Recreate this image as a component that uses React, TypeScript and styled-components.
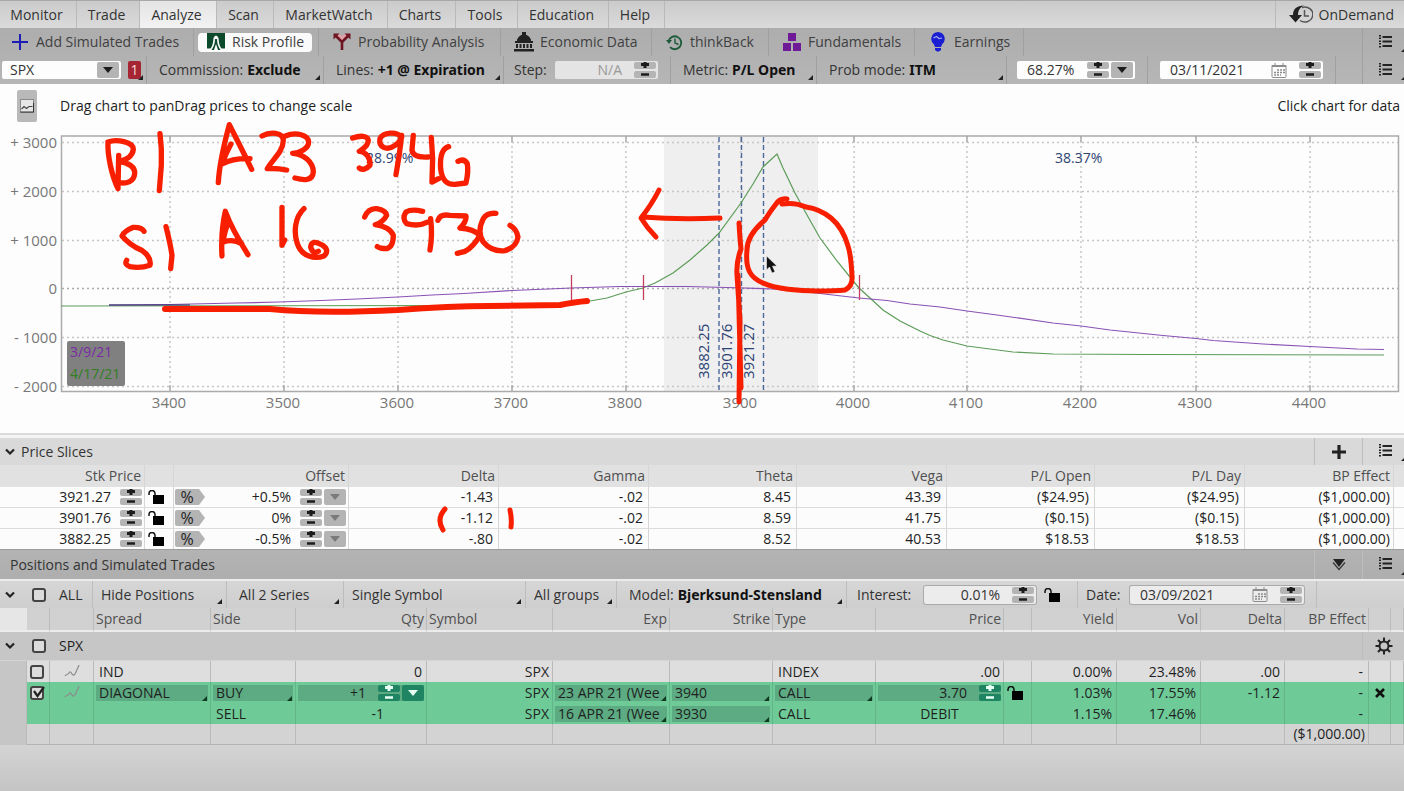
import React from "react";
import styled, { createGlobalStyle, css } from "styled-components";

const GlobalStyle = createGlobalStyle`
  *, *::before, *::after { box-sizing: border-box; }
  html, body, #root { min-height: 100vh; }
  body {
    margin: 0;
    font-family: "Open Sans", "Noto Sans", sans-serif;
    font-size: 14px;
    line-height: 20px;
    color: #333;
    background: #c6c6c6;
  }
  button, input, select { font: inherit; color: inherit; margin: 0; padding: 0; border: 0; background: none; border-radius: 0; }
  select { appearance: none; outline: none; }
  svg { display: block; flex: none; }
`;

const Page = styled.div`
  min-height: 100vh;
  display: flex;
  flex-direction: column;
`;

/* ---------- icons ---------- */

const PlusIcon = () => (
  <svg width="16" height="16" viewBox="0 0 16 16"><path d="M8 0v16M0 8h16" stroke="#1d1db4" strokeWidth="2" /></svg>
);
const RiskIcon = () => (
  <svg width="18" height="18" viewBox="0 0 18 18">
    <rect width="18" height="17" fill="#0d4a2c" />
    <path d="M0 15.500h3.500Q6 13 6.500 5Q9 0 11.500 5Q12 13 14.500 15.500H18V18H0z" fill="#fff" />
    <path d="M4.500 17Q8 12 8 6h2q0 6 3.500 11h-2.500l-2-6-2 6z" fill="#0d4a2c" />
  </svg>
);
const ForkIcon = () => (
  <svg width="18" height="18" viewBox="0 0 18 18">
    <path d="m3 3 6 7 6-7-3-2-3 2-3-2z" fill="#e2a0a8" />
    <path d="M9 17V9L3 3M9 9l6-6" fill="none" stroke="#6d1522" strokeWidth="2.600" />
    <path d="M.5.500h6L.5 6.500zM17.500.500h-6l6 6z" fill="#6d1522" />
  </svg>
);
const BankIcon = () => (
  <svg width="20" height="20" viewBox="0 0 20 20" fill="#222">
    <path d="M8 0h4v3H8zM3 9a7 6.500 0 0 1 14 0zM1 9h18v2H1zM2 12h2v4H2zM5.500 12h2v4h-2zM9 12h2v4H9zM12.500 12h2v4h-2zM16 12h2v4h-2zM0 17h20v2.500H0z" />
  </svg>
);
const BackIcon = () => (
  <svg width="17" height="17" viewBox="0 0 17 17" fill="none" stroke="#1c5a3a" strokeWidth="1.800">
    <path d="M2.500 7A6.500 6.500 0 1 1 4 13.200" />
    <path d="M0 6h6L3 10z" fill="#1c5a3a" stroke="none" />
    <path d="M9 4.500V9l3.500 1.500" strokeWidth="1.400" />
  </svg>
);
const BlocksIcon = () => (
  <svg width="18" height="18" viewBox="0 0 18 18" fill="#6f1a96">
    <path d="M5 0h8v8H5zM0 10h8v8H0zM10 10h8v8h-8z" />
  </svg>
);
const BulbIcon = () => (
  <svg width="14" height="20" viewBox="0 0 14 20">
    <path d="M7 0a7 7 0 0 1 4 12.500L10 15H4l-1-2.500A7 7 0 0 1 7 0zM4 16h6v2l-2 1.500H6L4 18z" fill="#1a1ed2" />
    <path d="m2.500 6 3-1.500 2.500 2 3-.500" fill="none" stroke="#a6a8f0" strokeWidth="1.200" />
  </svg>
);
const OnDemandIcon = () => (
  <svg width="24" height="20" viewBox="0 0 24 20">
    <path d="M13 2.500A8 7.500 0 1 1 11 15.500" fill="none" stroke="#555" strokeWidth="1.500" />
    <path d="M15.500 5v6H20" fill="none" stroke="#555" strokeWidth="1.500" />
    <path d="M15 .500C8 .500 4 4 4 10H0l6.500 7.500L13 10H9c0-5 2-7.500 6-9.500z" fill="#222" />
  </svg>
);
const ListIcon = () => (
  <svg width="13" height="13" viewBox="0 0 13 13" fill="#222">
    <path d="M3.500 1H13v2H3.500zM3.500 5.500H13v2H3.500zM3.500 10H13v2H3.500zM0 0h2v1.500H0zM0 2.500h2V4H0zM0 5.500h2V7H0zM0 8h2v1.500H0zM0 11h2v1.500H0z" />
  </svg>
);
const ChevronIcon = () => (
  <svg width="10" height="8" viewBox="0 0 10 8"><path d="m1 1.500 4 4 4-4" fill="none" stroke="#222" strokeWidth="2.200" /></svg>
);
const LockIcon = () => (
  <svg width="16" height="14" viewBox="0 0 16 14">
    <path d="M1 5V3.500a3 3 0 0 1 6 0V6" fill="none" stroke="#111" strokeWidth="1.500" />
    <path d="M5 5h11v9H5z" fill="#000" />
  </svg>
);
const CalendarIcon = () => (
  <svg width="16" height="15" viewBox="0 0 16 15" fill="none" stroke="#8c8c8c">
    <path d="M1 2.500h14v11a1 1 0 0 1-1 1H2a1 1 0 0 1-1-1z" />
    <path d="M1 3h14" strokeWidth="2" />
    <path d="M4 0v3M12 0v3" />
    <path d="M6 7h8M3 9.500h11M3 12h7" strokeWidth="1.500" strokeDasharray="2 1" />
  </svg>
);
const ImageIcon = () => (
  <svg width="14" height="14" viewBox="0 0 14 14">
    <rect x=".5" y=".5" width="13" height="13" fill="#e6e6e6" stroke="#8a8a8a" />
    <path d="m1.500 10 2.500-2.500 2.500 2L9 7.500l3.500 0" fill="none" stroke="#444" strokeWidth="1.200" />
    <path d="M.5 13h13V4" fill="none" stroke="#333" />
  </svg>
);
const GearIcon = () => (
  <svg width="18" height="18" viewBox="-9 -9 18 18" fill="none" stroke="#222" strokeWidth="2">
    <circle r="4.500" />
    <path d="M0-8.500V-5M0 8.500V5M-8.500 0H-5M8.500 0H5M-6-6l2.500 2.500M6-6 3.500-3.500M-6 6l2.500-2.500M6 6 3.500 3.500" />
  </svg>
);
const AddIcon = () => (
  <svg width="14" height="14" viewBox="0 0 14 14"><path d="M7 0v14M0 7h14" stroke="#222" strokeWidth="3.200" /></svg>
);
const CollapseIcon = () => (
  <svg width="14" height="13" viewBox="0 0 14 13"><path d="M1 1h12L7 9z" fill="#222" /><path d="m1 4.500 6 7 6-7" fill="none" stroke="#333" strokeWidth="1.200" /></svg>
);
const CloseIcon = () => (
  <svg width="10" height="10" viewBox="0 0 10 10"><path d="m1 1 8 8M9 1 1 9" stroke="#111" strokeWidth="2.600" /></svg>
);
const CurveIcon = () => (
  <svg width="16" height="13" viewBox="0 0 16 13"><path d="M1 11c1-2 3-1 4-3s2-1 3 1 3 1 4-2 2-4 3-7" fill="none" stroke="#8c8c8c" strokeWidth="1.200" /></svg>
);

/* ---------- shared controls ---------- */

const corner = css`
  position: relative;
  &::after {
    content: "";
    position: absolute;
    right: 3px;
    bottom: 4px;
    border-left: 5px solid transparent;
    border-bottom: 5px solid #222;
    pointer-events: none;
  }
`;

const Field = styled.span<{ $w: number; $muted?: boolean; $outlined?: boolean }>`
  display: flex;
  align-items: center;
  gap: 2px;
  flex: none;
  width: ${(p) => p.$w}px;
  height: 18px;
  padding-right: 2px;
  border-radius: 2px;
  background: ${(p) => (p.$muted ? "#e4e4e4" : "#fdfdfd")};
  color: ${(p) => (p.$muted ? "#999" : "#333")};
  ${(p) => p.$outlined && "box-shadow: 0 0 0 1px #aaa; background: #ececec;"}
`;

const TextInput = styled.input<{ $right?: boolean }>`
  flex: 1;
  min-width: 0;
  width: 0;
  height: 18px;
  padding: 0 10px;
  outline: none;
  text-align: ${(p) => (p.$right ? "right" : "left")};
`;
const SymbolInput = styled(TextInput)`
  padding: 0 8px;
`;

const StepStack = styled.span`
  display: inline-flex;
  flex-direction: column;
  gap: 2px;
  flex: none;
`;
const StepButton = styled.button<{ $green?: boolean }>`
  display: block;
  width: 22px;
  height: 7px;
  border-radius: 2px;
  background: ${(p) => (p.$green ? "#1f8462" : "#b4b4b4")};
  color: ${(p) => (p.$green ? "#e8fff4" : "#1c1c1c")};
`;
const DropButton = styled.button<{ $green?: boolean; $faint?: boolean }>`
  display: flex;
  align-items: center;
  justify-content: center;
  flex: none;
  width: 22px;
  height: 16px;
  border-radius: 2px;
  background: ${(p) => (p.$green ? "#1f8462" : "#b4b4b4")};
  color: ${(p) => (p.$green ? "#e8fff4" : p.$faint ? "#7a7a7a" : "#1c1c1c")};
`;
const IconButton = styled.button`
  display: flex;
  align-items: center;
  justify-content: center;
  flex: none;
`;

const Stepper = ({ green, name }: { green?: boolean; name: string }) => (
  <StepStack>
    <StepButton type="button" $green={green} aria-label={`Increase ${name}`}>
      <svg width="22" height="7" viewBox="0 0 22 7"><path d="M11 0v6M7 2.500h8" stroke="currentColor" strokeWidth="3" /></svg>
    </StepButton>
    <StepButton type="button" $green={green} aria-label={`Decrease ${name}`}>
      <svg width="22" height="7" viewBox="0 0 22 7"><path d="M7 3.500h8" stroke="currentColor" strokeWidth="2.500" /></svg>
    </StepButton>
  </StepStack>
);
const Drop = ({ green, faint, name }: { green?: boolean; faint?: boolean; name: string }) => (
  <DropButton type="button" $green={green} $faint={faint} aria-label={`${name} options`}>
    <svg width="10" height="6" viewBox="0 0 10 6"><path d="M0 0h10L5 6z" fill="currentColor" /></svg>
  </DropButton>
);

const CheckWrap = styled.span`
  position: relative;
  display: block;
  width: 14px;
  height: 14px;
  flex: none;
  svg { position: absolute; left: 2px; top: 0; pointer-events: none; }
`;
const CheckInput = styled.input`
  appearance: none;
  display: block;
  width: 14px;
  height: 14px;
  border: 2px solid #444;
  border-radius: 3px;
  background: #dcdcdc;
`;
const Check = ({ name, on }: { name: string; on?: boolean }) => (
  <CheckWrap>
    <CheckInput type="checkbox" aria-label={name} defaultChecked={on} />
    {on && <svg width="13" height="13" viewBox="0 0 13 13"><path d="m2 5 3.500 5L12 1" fill="none" stroke="#222" strokeWidth="2.200" /></svg>}
  </CheckWrap>
);

/* ---------- top tabs ---------- */

const TabBar = styled.nav`
  display: flex;
  height: 28px;
  border-top: 1px solid #a8a8a8;
  background: linear-gradient(#cbcbcb, #dadada);
`;
const Tab = styled.button<{ $w: number; $active?: boolean }>`
  width: ${(p) => p.$w}px;
  padding-right: 3px;
  border-right: 1px solid #b9b9b9;
  color: #333;
  background: ${(p) => (p.$active ? "linear-gradient(#e4e4e4, #f2f2f2)" : "none")};
`;
const OnDemand = styled.button`
  display: flex;
  align-items: center;
  gap: 6px;
  margin-left: auto;
  padding: 0 10px 0 13px;
  border-left: 1px solid #b9b9b9;
`;

/* ---------- toolbars ---------- */

const Toolbars = styled.div`
  background: linear-gradient(#adadad, #b6b6b6);
`;
const Bar = styled.div`
  display: flex;
  height: 28px;
`;
const Segment = styled.div<{ $w: number; $pad?: number; $corner?: boolean }>`
  display: flex;
  align-items: center;
  flex: none;
  gap: 4px;
  width: ${(p) => p.$w}px;
  padding-left: ${(p) => p.$pad ?? 12}px;
  border-right: 1px solid #a0a0a0;
  white-space: nowrap;
  ${(p) => p.$corner && corner}
`;
const ToolButton = styled.button<{ $active?: boolean }>`
  display: flex;
  align-items: center;
  gap: 6px;
  height: 19px;
  padding: ${(p) => (p.$active ? "0 8px" : "0")};
  border-radius: 4px;
  background: ${(p) => (p.$active ? "#fafafa" : "none")};
  color: #404040;
  white-space: nowrap;
`;
const IconSlot = styled.span`
  display: flex;
  justify-content: center;
  width: 20px;
`;
const Spacer = styled.div`
  flex: 1;
`;
const MenuSlot = styled.div`
  ${corner}
  display: flex;
  align-items: center;
  justify-content: center;
  width: 42px;
  padding: 0 0 2px 4px;
  flex: none;
  border-left: 1px solid #a0a0a0;
  &::after { right: -2px; }
`;
const InlineLabel = styled.label`
  display: flex;
  align-items: center;
  gap: 4px;
  flex: 1;
  min-width: 0;
  color: #333;
`;
const PlainSelect = styled.select<{ $bold?: boolean }>`
  flex: 1;
  min-width: 0;
  width: 0;
  height: 20px;
  ${(p) => p.$bold && `font-family: "Noto Sans", "Open Sans", sans-serif; font-weight: 700; color: #111;`}
`;
const SymbolBox = styled.span`
  display: flex;
  align-items: center;
  width: 119px;
  height: 18px;
  padding-right: 2px;
  border-radius: 2px;
  background: #fdfdfd;
`;
const Badge = styled.button`
  width: 13px;
  height: 18px;
  margin-left: 3px;
  border-radius: 2px;
  background: #a52532;
  color: #f4dada;
  line-height: 18px;
`;
const FieldGap = styled.span`
  width: 8px;
  flex: none;
`;

const tabs: [string, number][] = [
  ["Monitor", 77], ["Trade", 63], ["Analyze", 77], ["Scan", 57], ["MarketWatch", 114],
  ["Charts", 68], ["Tools", 62], ["Education", 91], ["Help", 56],
];

const tools: { label: string; w: number; pad: number; icon: React.ReactNode; active?: boolean }[] = [
  { label: "Add Simulated Trades", w: 194, pad: 10, icon: <PlusIcon /> },
  { label: "Risk Profile", w: 125, pad: 4, icon: <RiskIcon />, active: true },
  { label: "Probability Analysis", w: 182, pad: 13, icon: <ForkIcon /> },
  { label: "Economic Data", w: 151, pad: 13, icon: <BankIcon /> },
  { label: "thinkBack", w: 117, pad: 12, icon: <BackIcon /> },
  { label: "Fundamentals", w: 146, pad: 13, icon: <BlocksIcon /> },
  { label: "Earnings", w: 109, pad: 13, icon: <BulbIcon /> },
];

const Choice = ({ label, value, bold }: { label?: string; value: string; bold?: boolean }) => (
  <InlineLabel>
    {label}
    <PlainSelect $bold={bold} aria-label={label ? undefined : value}>
      <option>{value}</option>
    </PlainSelect>
  </InlineLabel>
);

/* ---------- chart ---------- */

const ChartPanel = styled.section`
  background: #fdfdfd;
  border-bottom: 2px solid #dadada;
`;
const ChartHints = styled.div`
  display: flex;
  align-items: center;
  height: 44px;
  padding: 0 4px 0 17px;
  color: #1e1e1e;
`;
const SnapshotButton = styled.button`
  display: flex;
  align-items: center;
  justify-content: center;
  width: 20px;
  height: 32px;
  margin-right: 23px;
  border-radius: 2px;
  background: #b9b9b9;
`;
const ChartSvg = styled.svg`
  width: 100%;
  height: auto;
  overflow: visible;
`;
const AxisText = styled.text`
  font-size: 15px;
  fill: #777;
`;
const SliceLabel = styled.text<{ $small?: boolean }>`
  font-size: ${(p) => (p.$small ? 14 : 15)}px;
  fill: #2c4373;
`;
const LegendText = styled.text<{ $color: string }>`
  font-size: 14px;
  fill: ${(p) => p.$color};
`;

const gridX: [number, string][] = [
  [170, "3400"], [284, "3500"], [398, "3600"], [512, "3700"], [626, "3800"], [741, "3900"],
  [854, "4000"], [967, "4100"], [1081, "4200"], [1196, "4300"], [1310, "4400"],
];
const gridY: [number, string][] = [
  [142, "+ 3000"], [191, "+ 2000"], [240, "+ 1000"], [288, "0"], [337, "- 1000"], [386, "- 2000"],
];
const greenLine =
  "61,306 480,305.500 540,304.500 571,303 590,301 607,298 626,292 643,288 655,283 673,273 690,260 707,245 719,233 741,203 753,184 763,167 777,154 783,168 795,193 807,215 820,238 837,261 854,282 859,288 870,298 883,310 900,321 920,331 930,335.500 943,340 967,346 990,349 1013,352 1053,354 1147,354.500 1384,355";
const purpleLine =
  "109,305 170,304.500 236,303 279,302 321,300.500 357,299 398,297 432,295 464,293.500 512,290.500 560,288.500 571,288 620,286.500 687,286.500 727,287.500 773,289 807,292 833,295 859,298 887,300.500 910,304 940,307 967,311 997,315 1053,323 1081,326 1110,330 1163,335.500 1196,338.500 1213,340.500 1263,344 1310,346.500 1357,349 1384,349.500";

/* Handwritten notes, drawn on a canvas three times finer than the chart's. */
const noteStrokes = [
  "M24 60C22 100 35 160 54 200L56 100M24 60C50 50 100 60 100 82C98 105 75 115 58 118C85 122 106 135 104 155C102 178 80 186 58 182",
  "M180 35Q186 80 184 130L178 206",
  "M355 182Q358 120 388 8Q425 80 455 142M393 66Q372 105 368 125Q400 108 450 110",
  "M486 42C510 28 550 30 550 55C550 90 515 115 502 140Q530 138 560 144",
  "M556 42C590 28 625 40 626 60C626 80 600 92 578 94C610 95 640 120 640 150C638 178 610 175 585 168",
  "M758 48C780 40 803 40 805 55C805 75 785 82 778 88C800 90 812 110 810 130C800 142 785 145 778 138",
  "M905 45C890 28 850 30 840 50C835 75 860 88 885 70Q902 60 905 40Q900 90 888 158",
  "M940 40L936 85Q940 108 985 105M994 46L998 110L996 180L1016 170",
  "M1046 74C1025 80 1020 110 1022 140C1026 175 1040 188 1065 187L1098 183Q1106 150 1102 125Q1092 108 1074 118",
  "M132 328Q125 315 100 316Q72 328 66 342Q90 370 125 385Q155 405 150 430Q120 440 90 434Q72 428 80 415",
  "M198 314Q212 370 216 400L212 440",
  "M366 402Q362 330 376 268Q395 320 444 398M385 300Q370 340 370 360Q400 350 425 365",
  "M546 256V370L554 354",
  "M612 260C585 285 580 330 592 365C605 405 645 412 672 402Q690 385 668 370Q635 350 632 375Q638 398 655 388",
  "M794 285Q805 258 830 260Q858 265 860 280Q850 300 826 308Q870 315 880 340Q880 375 860 380Q840 380 832 374",
  "M968 268Q935 260 918 270Q905 290 920 305Q955 315 985 300M992 290Q998 340 990 384",
  "M1014 295Q1020 275 1050 280L1098 282Q1100 300 1080 318Q1120 320 1140 340Q1120 375 1095 388L1072 394",
  "M1188 274Q1160 272 1150 290Q1130 330 1150 360Q1175 390 1215 386Q1250 375 1254 345Q1250 320 1230 310",
];

const Chart = () => (
  <ChartSvg viewBox="0 128 1404 305" role="img" aria-label="Risk profile chart">
    <rect x="664" y="136" width="154" height="255" fill="#efefef" />
    <g stroke="#c6c6c6" strokeWidth="1.500" strokeDasharray="2 3">
      {gridY.map(([y]) => <path key={y} d={`M62 ${y}.500H1398`} stroke={y === 288 ? "#aaa" : undefined} />)}
      {gridX.map(([x]) => <path key={x} d={`M${x} 136V391`} />)}
    </g>
    {gridX.map(([x]) => <path key={x} d={`M${x} 136v6M${x} 391v-6`} stroke="#aaa" strokeWidth="1.500" />)}
    <rect x="61.500" y="136" width="1337" height="255.500" fill="none" stroke="#ababab" strokeWidth="1.500" />
    <rect x="67" y="341" width="58" height="45" rx="2" fill="#808080" />
    {gridY.map(([y, t]) => <AxisText key={t} x="57" y={y + 6} textAnchor="end">{t}</AxisText>)}
    {gridX.map(([x, t]) => <AxisText key={t} x={x - 1} y="408" textAnchor="middle">{t}</AxisText>)}
    <LegendText $color="#7a2ba6" x="70" y="357">3/9/21</LegendText>
    <LegendText $color="#317f22" x="70" y="379">4/17/21</LegendText>
    <g stroke="#4a6898" strokeWidth="1.400" strokeDasharray="5 3">
      <path d="M719 137V391M741.500 137V391M763.500 137V391" />
    </g>
    <SliceLabel x="709" y="379" transform="rotate(-90 709 379)">3882.25</SliceLabel>
    <SliceLabel x="732" y="379" transform="rotate(-90 732 379)">3901.76</SliceLabel>
    <SliceLabel x="754" y="379" transform="rotate(-90 754 379)">3921.27</SliceLabel>
    <SliceLabel $small x="366" y="163">28.99%</SliceLabel>
    <SliceLabel $small x="1055" y="163">38.37%</SliceLabel>
    <polyline points={greenLine} fill="none" stroke="#5c9c58" strokeWidth="1.200" />
    <polyline points={purpleLine} fill="none" stroke="#8a52b4" strokeWidth="1.200" />
    <path d="M109 305H190" stroke="#2a2a66" />
    <g stroke="#c0405e" strokeWidth="1.300">
      <path d="M571.500 275v25" />
      <path d="M643.500 275v25" />
      <path d="M859.500 275v25" />
    </g>
    <g transform="translate(100 122) scale(0.3333)" fill="none" stroke="#f81f00" strokeWidth="16" strokeLinecap="round" strokeLinejoin="round">
      {noteStrokes.map((d) => <path key={d} d={d} />)}
    </g>
    <g fill="none" stroke="#f81f00" strokeWidth="5" strokeLinecap="round" strokeLinejoin="round">
      <path d="M720 218Q680 220 642 217M659 190Q652 204 641 218Q647 228 656 237" />
      <path d="M787 199Q780 198 776 204Q769 213 765 220Q747 235 747 250C745 270 751 278 763 283C775 289 800 291 817 291Q836 291 845 290Q853 286 852 276Q851 255 848 246Q843 228 831 218Q820 209 806 207Q795 202 782 204" />
      <path d="M165 309H270Q320 314 398 310Q450 306 489 306L560 305Q575 302 587 301" strokeWidth="6" />
      <path d="M739 223Q740 240 741 249Q736 262 737 275L740 320L739 402M738 275L741 388" />
    </g>
    <path d="M766.500 256v14l3-3 2.500 6 3-1.300-2.500-5.500 4.500-.200z" fill="#111" stroke="#f2f2f2" strokeWidth=".6" />
  </ChartSvg>
);

/* ---------- price slices ---------- */

const SectionBar = styled.header<{ $dark?: boolean }>`
  display: flex;
  align-items: center;
  height: ${(p) => (p.$dark ? 30 : 27)}px;
  padding-left: ${(p) => (p.$dark ? 10 : 5)}px;
  background: ${(p) => (p.$dark ? "linear-gradient(#b3b3b3, #aeaeae)" : "#d9d9d9")};
  ${(p) => p.$dark && "border-top: 1px solid #9d9d9d;"}
`;
const SlicesSection = styled.section`
  border-top: 3px solid #f4f4f4;
`;
const SectionTitle = styled.h2<{ $gap?: boolean }>`
  flex: 1;
  margin: 0 0 0 ${(p) => (p.$gap ? 6 : 0)}px;
  font-size: 14px;
  font-weight: 400;
`;
const BarCell = styled.div`
  display: flex;
  align-items: center;
  justify-content: center;
  align-self: stretch;
  width: 48px;
  border-left: 1px solid #bdbdbd;
`;
const BarMenu = styled(MenuSlot)`
  align-self: stretch;
  border-left-color: #bdbdbd;
`;
const GearCell = styled(BarCell)`
  width: 42px;
`;

const DataTable = styled.table`
  width: 100%;
  table-layout: fixed;
  border-collapse: separate;
  border-spacing: 0;
  white-space: nowrap;
  th { font-weight: 400; color: #505050; padding: 0; }
  td { padding: 0; }
`;
const SlicesTable = styled(DataTable)`
  color: #222;
  th { height: 22px; padding-right: 3px; text-align: right; background: #e1e1e1; border-right: 1px solid #d6d6d6; }
  td { height: 21px; padding-right: 5px; text-align: right; border-right: 1px solid #d6d6d6; background: #fcfcfc; border-bottom: 1px solid #dcdcdc; }
  tbody tr:last-child td { border-bottom: 0; height: 20px; }
  td:nth-last-child(2) { padding-right: 3px; }
  td:last-child, th:last-child { border-right: 0; padding: 0; }
`;
const CellControls = styled.div`
  display: flex;
  align-items: center;
  justify-content: flex-end;
  gap: 2px;
`;
const CellInput = styled.input`
  flex: 1;
  min-width: 0;
  width: 0;
  height: 20px;
  padding-right: 7px;
  text-align: right;
  outline: none;
`;
const PercentTag = styled.button`
  width: 30px;
  height: 16px;
  margin-left: 1px;
  padding-right: 6px;
  border-radius: 2px 0 0 2px;
  background: #b4b4b4;
  clip-path: polygon(0 0, 80% 0, 100% 50%, 80% 100%, 0 100%);
  font-size: 16px;
  line-height: 16px;
`;
const Tight = styled.td`
  && { padding-right: 2px; }
`;
const LockHolder = styled.div`
  display: flex;
  align-items: center;
  padding-left: 3px;
`;
const MarkedCell = styled.div`
  position: relative;
`;
const MarkSvg = styled.svg`
  position: absolute;
  right: -24px;
  top: -4px;
  pointer-events: none;
`;

const slices = [
  ["3921.27", "+0.5%", "-1.43", "-.02", "8.45", "43.39", "($24.95)", "($24.95)", "($1,000.00)"],
  ["3901.76", "0%", "-1.12", "-.02", "8.59", "41.75", "($0.15)", "($0.15)", "($1,000.00)"],
  ["3882.25", "-0.5%", "-.80", "-.02", "8.52", "40.53", "$18.53", "$18.53", "($1,000.00)"],
];
const sliceCols = [145, 29, 175, 150, 150, 148, 150, 148, 150, 149, 10];

/* ---------- positions ---------- */

const FilterBar = styled.div`
  display: flex;
  height: 27px;
  background: linear-gradient(#d6d6d6, #cecece);
`;
const Rule = styled.div`
  height: 2px;
  background: #ececec;
`;
const FilterSegment = styled(Segment)`
  border-right-color: #bdbdbd;
  &::after { right: 4px; }
`;
const PositionsTable = styled(DataTable)`
  color: #1f1f1f;
  thead th { height: 24px; padding: 0 2px; background: #d1d1d1; border-right: 1px solid #bbb; border-bottom: 2px solid #ececec; }
  thead th:first-child { background: #e6e6e6; border-right: 0; }
  tbody td { height: 21px; border-right: 1px solid #bababa; }
`;
const HeadCell = styled.th<{ $left?: boolean }>`
  text-align: ${(p) => (p.$left ? "left" : "right")};
`;
const GroupCell = styled.td`
  && { height: 29px; background: #c6c6c6; border: 0; border-bottom: 1px solid #d4d4d4; }
`;
const GroupInner = styled.div`
  display: flex;
  align-items: center;
  height: 28px;
  padding-left: 5px;
`;
const GroupLead = styled.div<{ $w: number }>`
  display: flex;
  align-items: center;
  flex: none;
  gap: 17px;
  width: ${(p) => p.$w}px;
`;
const Row = styled.tr<{ $tone: "light" | "green" | "blank" }>`
  td:not(:first-child) {
    background: ${(p) => ({ light: "#dedede", green: "#6ecb98", blank: "#d3d3d3" })[p.$tone]};
    ${(p) => p.$tone === "green" && "border-right-color: #62b588;"}
    ${(p) => p.$tone === "blank" && "border-bottom: 1px solid #b4b4b4;"}
  }
`;
const Cell = styled.td<{ $left?: boolean; $center?: boolean; $pr?: number; $pl?: number }>`
  && {
    text-align: ${(p) => (p.$left ? "left" : p.$center ? "center" : "right")};
    padding-left: ${(p) => p.$pl ?? 0}px;
    padding-right: ${(p) => p.$pr ?? 0}px;
  }
`;
const Centered = styled.div`
  display: flex;
  align-items: center;
  justify-content: center;
`;
const GreenPick = styled.div`
  ${corner}
  height: 16px;
  margin: 0 2px;
  background: #5cab82;
  &::after { right: 1px; bottom: 0; border-bottom-color: #0f3a20; }
`;
const GreenSelect = styled.select`
  display: block;
  width: 100%;
  height: 16px;
  padding: 0 7px 0 3px;
  line-height: 16px;
  text-overflow: clip;
`;
const GreenField = styled.div`
  display: flex;
  align-items: center;
  gap: 2px;
  height: 16px;
  margin: 0 2px;
  background: #5cab82;
`;
const GreenInput = styled(CellInput)`
  height: 16px;
  padding-right: 10px;
`;
const LockGap = styled.span`
  padding: 0 17px 0 4px;
`;
const Backdrop = styled.div`
  flex: 1;
  background: linear-gradient(#d4d4d4, #c4c4c4);
`;

const posCols = [27, 23, 44, 117, 85, 131, 126, 117, 103, 103, 128, 28, 85, 84, 84, 84, 22, 13];

const Pick = ({ value, name }: { value: string; name: string }) => (
  <GreenPick>
    <GreenSelect aria-label={name}><option>{value}</option></GreenSelect>
  </GreenPick>
);

export default function App() {
  return (
    <Page>
      <GlobalStyle />
      <TabBar aria-label="Main">
        {tabs.map(([label, w]) => (
          <Tab key={label} type="button" $w={w} $active={label === "Analyze"}>{label}</Tab>
        ))}
        <OnDemand type="button"><OnDemandIcon />OnDemand</OnDemand>
      </TabBar>

      <Toolbars>
        <Bar>
          {tools.map((t) => (
            <Segment key={t.label} $w={t.w} $pad={t.pad}>
              <ToolButton type="button" $active={t.active}><IconSlot>{t.icon}</IconSlot>{t.label}</ToolButton>
            </Segment>
          ))}
          <Spacer />
          <MenuSlot><IconButton type="button" aria-label="View menu"><ListIcon /></IconButton></MenuSlot>
        </Bar>
        <Bar>
          <Segment $w={147} $pad={2} $corner>
            <SymbolBox>
              <SymbolInput aria-label="Symbol" defaultValue="SPX" />
              <Drop name="Symbol" />
            </SymbolBox>
            <Badge type="button">1</Badge>
          </Segment>
          <Segment $w={177} $corner><Choice label="Commission:" value="Exclude" bold /></Segment>
          <Segment $w={180} $corner><Choice label="Lines:" value="+1 @ Expiration" bold /></Segment>
          <Segment $w={167} $pad={10}>
            <InlineLabel>
              Step:
              <Spacer />
              <Field $w={103} $muted><TextInput $right defaultValue="N/A" /><Stepper name="step" /></Field>
              <FieldGap />
            </InlineLabel>
          </Segment>
          <Segment $w={146} $corner><Choice label="Metric:" value="P/L Open" bold /></Segment>
          <Segment $w={190} $corner><Choice label="Prob mode:" value="ITM" bold /></Segment>
          <Segment $w={141} $pad={10}>
            <Field $w={118}>
              <TextInput aria-label="Probability range" defaultValue="68.27%" />
              <Stepper name="probability range" />
              <Drop name="Probability range" />
            </Field>
          </Segment>
          <Segment $w={188}>
            <Field $w={163}>
              <TextInput aria-label="Target date" defaultValue="03/11/2021" />
              <IconButton type="button" aria-label="Pick target date"><CalendarIcon /></IconButton>
              <FieldGap />
              <Stepper name="target date" />
            </Field>
          </Segment>
          <Spacer />
          <MenuSlot><IconButton type="button" aria-label="Settings menu"><ListIcon /></IconButton></MenuSlot>
        </Bar>
      </Toolbars>

      <ChartPanel>
        <ChartHints>
          <SnapshotButton type="button" aria-label="Snapshot"><ImageIcon /></SnapshotButton>
          <span>Drag chart to pan</span>
          <span>Drag prices to change scale</span>
          <Spacer />
          <span>Click chart for data</span>
        </ChartHints>
        <Chart />
      </ChartPanel>

      <SlicesSection>
        <SectionBar>
          <IconButton type="button" aria-label="Collapse price slices"><ChevronIcon /></IconButton>
          <SectionTitle $gap>Price Slices</SectionTitle>
          <BarCell><IconButton type="button" aria-label="Add slice"><AddIcon /></IconButton></BarCell>
          <BarMenu><IconButton type="button" aria-label="Price slices menu"><ListIcon /></IconButton></BarMenu>
        </SectionBar>
        <SlicesTable>
          <colgroup>{sliceCols.map((w, i) => <col key={i} width={w} />)}</colgroup>
          <thead>
            <tr>
              <th scope="col">Stk Price</th><th /><th scope="col">Offset</th><th scope="col">Delta</th>
              <th scope="col">Gamma</th><th scope="col">Theta</th><th scope="col">Vega</th>
              <th scope="col">P/L Open</th><th scope="col">P/L Day</th><th scope="col">BP Effect</th><th />
            </tr>
          </thead>
          <tbody>
            {slices.map(([price, offset, ...rest], r) => (
              <tr key={price}>
                <Tight>
                  <CellControls>
                    <CellInput aria-label={`Stock price ${r + 1}`} defaultValue={price} />
                    <Stepper name="stock price" />
                  </CellControls>
                </Tight>
                <Tight>
                  <LockHolder><IconButton type="button" aria-label="Lock price"><LockIcon /></IconButton></LockHolder>
                </Tight>
                <Tight>
                  <CellControls>
                    <PercentTag type="button">%</PercentTag>
                    <CellInput aria-label={`Offset ${r + 1}`} defaultValue={offset} />
                    <Stepper name="offset" />
                    <Drop faint name="Offset" />
                  </CellControls>
                </Tight>
                {rest.map((v, i) => (
                  <td key={i}>
                    {r === 1 && i === 0 ? (
                      <MarkedCell>
                        {v}
                        <MarkSvg width="82" height="30" viewBox="435 498 82 30" fill="none" stroke="#f81f00" strokeWidth="5" strokeLinecap="round">
                          <path d="M445 503Q436 513 443 524M510 504Q512 513 511 521" />
                        </MarkSvg>
                      </MarkedCell>
                    ) : v}
                  </td>
                ))}
                <td />
              </tr>
            ))}
          </tbody>
        </SlicesTable>
      </SlicesSection>

      <section>
        <SectionBar $dark>
          <SectionTitle>Positions and Simulated Trades</SectionTitle>
          <BarCell><IconButton type="button" aria-label="Collapse positions"><CollapseIcon /></IconButton></BarCell>
          <BarMenu><IconButton type="button" aria-label="Positions menu"><ListIcon /></IconButton></BarMenu>
        </SectionBar>
        <Rule />
        <FilterBar>
          <FilterSegment $w={93} $pad={5}>
            <GroupLead $w={50}>
              <IconButton type="button" aria-label="Collapse all"><ChevronIcon /></IconButton>
              <Check name="Select all" />
            </GroupLead>
            ALL
          </FilterSegment>
          <FilterSegment $w={134} $pad={8} $corner><Choice value="Hide Positions" /></FilterSegment>
          <FilterSegment $w={117} $corner><Choice value="All 2 Series" /></FilterSegment>
          <FilterSegment $w={182} $pad={8} $corner><Choice value="Single Symbol" /></FilterSegment>
          <FilterSegment $w={91} $pad={8} $corner><Choice value="All groups" /></FilterSegment>
          <FilterSegment $w={230} $corner><Choice label="Model:" value="Bjerksund-Stensland" bold /></FilterSegment>
          <FilterSegment $w={231} $pad={10}>
            <InlineLabel>
              Interest:
              <Spacer />
              <Field $w={112} $outlined><TextInput $right defaultValue="0.01%" /><Stepper name="interest" /></Field>
            </InlineLabel>
            <LockGap><IconButton type="button" aria-label="Lock interest"><LockIcon /></IconButton></LockGap>
          </FilterSegment>
          <FilterSegment $w={239} $pad={8}>
            <InlineLabel>
              Date:
              <Spacer />
              <Field $w={174} $outlined>
                <TextInput defaultValue="03/09/2021" />
                <CalendarIcon />
                <FieldGap />
                <Stepper name="date" />
              </Field>
              <FieldGap />
            </InlineLabel>
          </FilterSegment>
        </FilterBar>
        <PositionsTable>
          <colgroup>{posCols.map((w, i) => <col key={i} width={w} />)}</colgroup>
          <thead>
            <tr>
              <th /><th /><th />
              <HeadCell $left>Spread</HeadCell><HeadCell $left>Side</HeadCell><HeadCell>Qty</HeadCell>
              <HeadCell $left>Symbol</HeadCell><HeadCell>Exp</HeadCell><HeadCell>Strike</HeadCell>
              <HeadCell $left>Type</HeadCell><HeadCell>Price</HeadCell><th />
              <HeadCell>Yield</HeadCell><HeadCell>Vol</HeadCell><HeadCell>Delta</HeadCell>
              <HeadCell>BP Effect</HeadCell><th /><th />
            </tr>
          </thead>
          <tbody>
            <tr>
              <GroupCell colSpan={18}>
                <GroupInner>
                  <GroupLead $w={54}>
                    <IconButton type="button" aria-label="Collapse SPX"><ChevronIcon /></IconButton>
                    <Check name="Select SPX" />
                  </GroupLead>
                  SPX
                  <Spacer />
                  <GearCell><IconButton type="button" aria-label="SPX settings"><GearIcon /></IconButton></GearCell>
                </GroupInner>
              </GroupCell>
            </tr>
            <Row $tone="light">
              <td />
              <Cell $pr={3}><Centered><Check name="Select IND" /></Centered></Cell>
              <Cell><Centered><CurveIcon /></Centered></Cell>
              <Cell $left $pl={5}>IND</Cell>
              <td />
              <Cell $pr={4}>0</Cell>
              <Cell $pr={3}>SPX</Cell>
              <td /><td />
              <Cell $left $pl={5}>INDEX</Cell>
              <Cell $pr={3}>.00</Cell>
              <td />
              <Cell $pr={4}>0.00%</Cell>
              <Cell $pr={4}>23.48%</Cell>
              <Cell $pr={4}>.00</Cell>
              <Cell $pr={5}>-</Cell>
              <td /><td />
            </Row>
            <Row $tone="green">
              <td />
              <Cell $pr={3}><Centered><Check name="Select DIAGONAL" on /></Centered></Cell>
              <Cell><Centered><CurveIcon /></Centered></Cell>
              <Cell><Pick name="Spread" value="DIAGONAL" /></Cell>
              <Cell><Pick name="Side" value="BUY" /></Cell>
              <Cell>
                <GreenField>
                  <GreenInput aria-label="Quantity" defaultValue="+1" />
                  <Stepper green name="quantity" />
                  <Drop green name="Quantity" />
                </GreenField>
              </Cell>
              <Cell $pr={3}>SPX</Cell>
              <Cell><Pick name="Expiration 1" value="23 APR 21 (Weeklys)" /></Cell>
              <Cell><Pick name="Strike 1" value="3940" /></Cell>
              <Cell><Pick name="Type" value="CALL" /></Cell>
              <Cell>
                <GreenField>
                  <GreenInput aria-label="Price" defaultValue="3.70" />
                  <Stepper green name="price" />
                </GreenField>
              </Cell>
              <Cell><LockHolder><IconButton type="button" aria-label="Lock price"><LockIcon /></IconButton></LockHolder></Cell>
              <Cell $pr={4}>1.03%</Cell>
              <Cell $pr={4}>17.55%</Cell>
              <Cell $pr={4}>-1.12</Cell>
              <Cell $pr={5}>-</Cell>
              <Cell><Centered><IconButton type="button" aria-label="Remove"><CloseIcon /></IconButton></Centered></Cell>
              <td />
            </Row>
            <Row $tone="green">
              <td /><td /><td /><td />
              <Cell $left $pl={5}>SELL</Cell>
              <Cell $pr={42}>-1</Cell>
              <Cell $pr={3}>SPX</Cell>
              <Cell><Pick name="Expiration 2" value="16 APR 21 (Weeklys)" /></Cell>
              <Cell><Pick name="Strike 2" value="3930" /></Cell>
              <Cell $left $pl={5}>CALL</Cell>
              <Cell $center>DEBIT</Cell>
              <td />
              <Cell $pr={4}>1.15%</Cell>
              <Cell $pr={4}>17.46%</Cell>
              <td />
              <Cell $pr={5}>-</Cell>
              <td /><td />
            </Row>
            <Row $tone="blank">
              <td /><td /><td /><td /><td /><td /><td /><td /><td /><td /><td /><td /><td /><td /><td />
              <Cell $pr={3}>($1,000.00)</Cell>
              <td /><td />
            </Row>
          </tbody>
        </PositionsTable>
      </section>
      <Backdrop />
    </Page>
  );
}
